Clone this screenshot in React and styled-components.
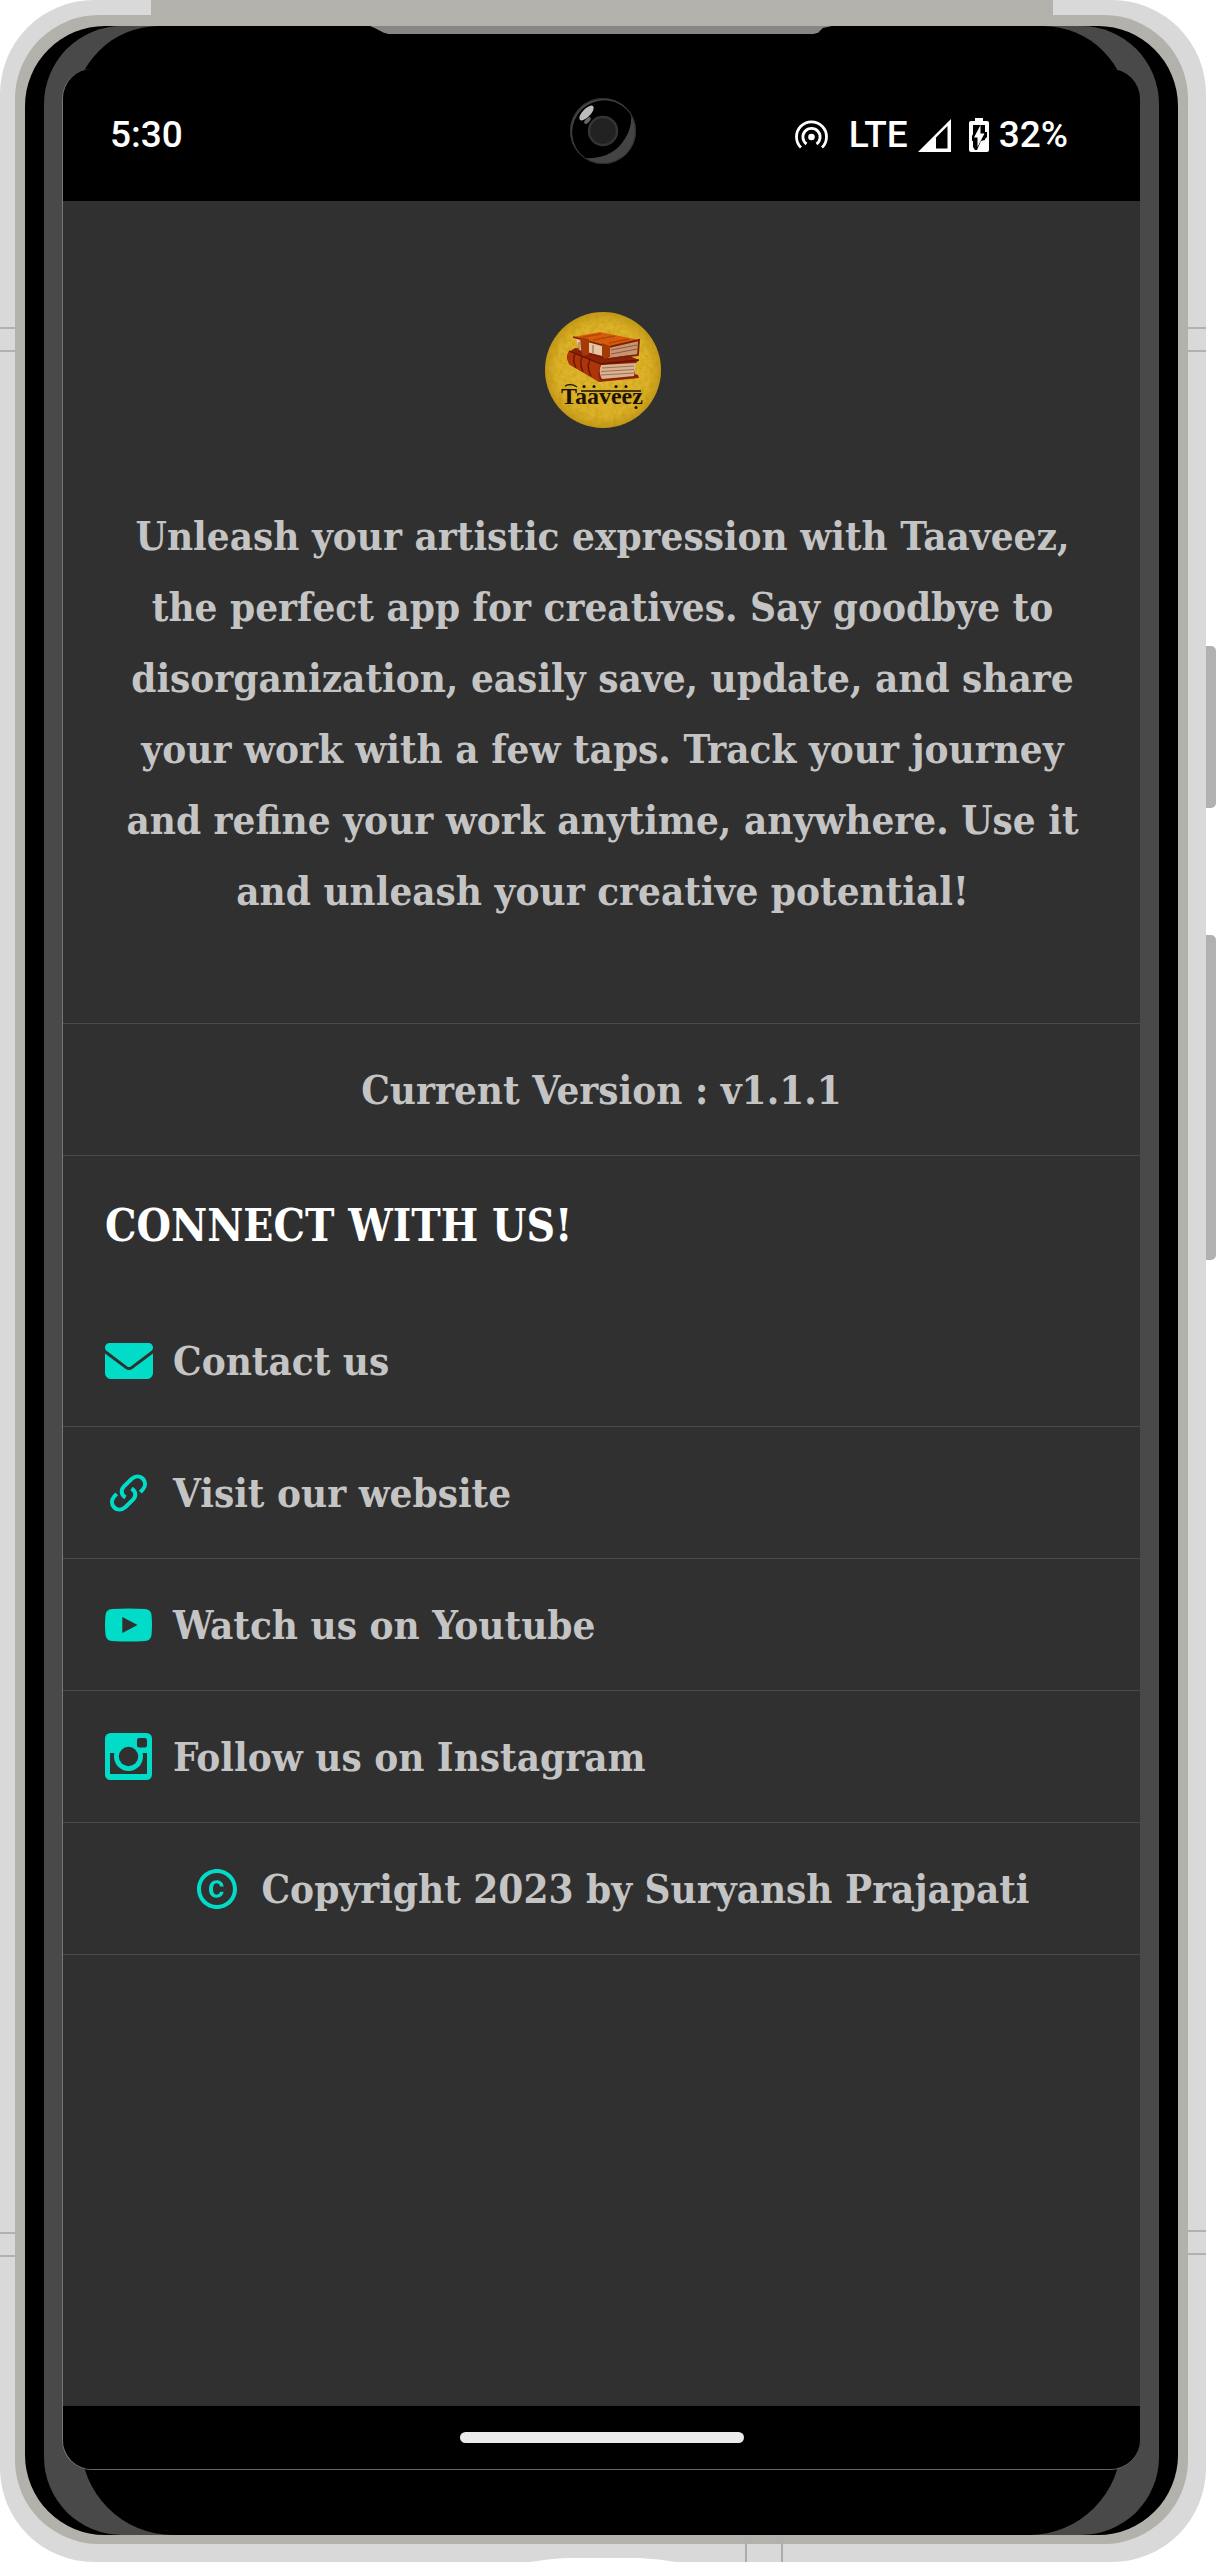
import React from "react";
import styled, { createGlobalStyle } from "styled-components";
import { FaEnvelope } from "react-icons/fa6";
import { MdCopyright } from "react-icons/md";

const GlobalStyle = createGlobalStyle`
  *, *::before, *::after { box-sizing: border-box; }
  body { margin: 0; background: #fff; }
`;

const slab = `"DejaVu Serif Condensed", "DejaVu Serif", serif`;

/* ---------- device ---------- */

const Device = styled.div`
  position: relative;
  display: flex;
  min-height: 100vh;
  margin-right: 10px;
  padding: 15px 18px 18px 15px;
  background: #d9d9d9;
  border-radius: 94px;
`;

const Rail = styled.div`
  flex: 1;
  display: flex;
  padding: 11px 10px 9px;
  background: #b2b1ab;
  border-radius: 84px;
`;

const Bezel = styled.div`
  flex: 1;
  display: flex;
  padding: 0 19px;
  background: #000;
  border-radius: 80px;
`;

const Glass = styled.div`
  flex: 1;
  display: flex;
  flex-direction: column;
  padding: 0 19px 0 18px;
  background: #494949;
  border-radius: 78px;
`;

const TopCap = styled.div`
  height: 85px;
  margin: 0 12px;
  background: #000;
  border-radius: 85px 85px 0 0;
`;

const BottomCap = styled.div`
  height: 92px;
  margin: -27px 19px 0;
  background: #000;
  border-radius: 0 0 92px 92px;
`;

const Screen = styled.div`
  position: relative;
  z-index: 1;
  flex: 1;
  display: flex;
  flex-direction: column;
  margin-top: -42px;
  overflow: hidden;
  background: #303030;
  border-left: 1px solid #777;
  border-bottom: 1px solid #666;
  border-radius: 30px;
`;

const TopBand = styled.div`
  position: absolute;
  top: 0;
  left: 151px;
  right: 153px;
  height: 26px;
  background: #b2b1ab;
`;

const Speaker = styled.div`
  position: absolute;
  top: 26px;
  left: 370px;
  right: 374px;
  height: 8px;
  background: #868686;
  clip-path: polygon(0 0, 100% 0, 98% 25%, 97% 85%, 96% 100%, 4% 100%, 3% 85%, 1% 25%);
`;

const SideKey = styled.div`
  position: absolute;
  left: 100%;
  top: ${(p) => p.$top}px;
  width: 10px;
  height: ${(p) => p.$length}px;
  background: #b1b1b1;
  border-radius: 0 5px 5px 0;
`;

const Antenna = styled.div`
  position: absolute;
  ${(p) => p.$side}: 0;
  ${(p) => (p.$top ? `top: ${p.$top}px` : `bottom: ${p.$bottom}px`)};
  width: ${(p) => (p.$side === "left" ? 16 : 19)}px;
  height: 25px;
  border: 2px solid #b1b1b1;
  border-width: 2px 0;
`;

const BottomAntenna = styled.div`
  position: absolute;
  bottom: 0;
  left: 745px;
  width: 38px;
  height: 19px;
  border: 2px solid #acacac;
  border-width: 0 2px;
`;

const Port = styled.div`
  position: absolute;
  bottom: 0;
  left: 530px;
  width: 146px;
  height: 4px;
  background: #fff;
  clip-path: polygon(0 100%, 12% 40%, 24% 0, 75% 0, 88% 40%, 100% 100%);
`;

/* ---------- status bar ---------- */

const StatusBar = styled.header`
  position: relative;
  display: flex;
  align-items: center;
  height: 132px;
  padding: 0 72px 0 47px;
  background: #000;
  color: #fff;
  font: 500 37px/44px Roboto, Lato, sans-serif;
`;

const StatusRight = styled.div`
  display: flex;
  align-items: center;
  gap: 10px;
  margin-left: auto;
`;

const Network = styled.span`
  margin-left: 11px;
`;

const Battery = styled.span`
  display: flex;
  align-items: center;
  gap: 10px;
  margin-left: 8px;
`;

const Camera = styled.svg`
  position: absolute;
  top: 29px;
  left: 50%;
  margin-left: -32px;
`;

/* ---------- page ---------- */

const Page = styled.main`
  flex: 1;
  display: flex;
  flex-direction: column;
  color: #c4c4c4;
  font: 700 40px/71px ${slab};
`;

const Intro = styled.section`
  display: flex;
  flex-direction: column;
  align-items: center;
  gap: 72px;
  padding: 111px 50px 97px 52px;
  border-bottom: 1px solid #4a4a4a;
`;

const About = styled.p`
  margin: 0;
  text-align: center;
`;

const Version = styled.p`
  display: flex;
  align-items: center;
  justify-content: center;
  height: 132px;
  margin: 0;
  border-bottom: 1px solid #4a4a4a;
`;

const Heading = styled.h2`
  display: flex;
  align-items: center;
  height: 139px;
  margin: 0;
  padding: 0 42px;
  color: #fff;
  font-size: 44px;
`;

const List = styled.ul`
  margin: 0;
  padding: 0;
  list-style: none;
`;

const Item = styled.li`
  border-bottom: 1px solid #4a4a4a;
`;

const ItemLink = styled.a`
  display: flex;
  align-items: center;
  gap: 20px;
  height: 131px;
  padding: 0 42px;
  color: inherit;
  text-decoration: none;

  svg {
    flex: none;
    color: #00dcc8;
  }
`;

const Copyright = styled(ItemLink).attrs({ as: "p" })`
  justify-content: center;
  margin: 0;
  padding: 0 22px 0 42px;
`;

const NavBar = styled.footer`
  display: flex;
  justify-content: center;
  align-items: center;
  height: 63px;
  background: #000;
`;

const HomeHandle = styled.button`
  width: 284px;
  height: 11px;
  padding: 0;
  border: 0;
  border-radius: 6px;
  background: #ebebeb;
`;

/* ---------- drawings ---------- */

const CameraLens = () => (
  <Camera width="66" height="66" viewBox="0 0 66 66" aria-hidden="true">
    <circle cx="33" cy="33" r="33" fill="#444" />
    <path d="M61 17A32 32 0 1 0 15 60C28 61 43 57 52 45C59 36 62 26 61 17Z" fill="#000" />
    <circle cx="33" cy="33" r="32.5" fill="none" stroke="#2e2e2e" strokeWidth="1" />
    <circle cx="33" cy="33" r="14" fill="#222" stroke="#343434" strokeWidth="2.5" />
    <ellipse cx="16.500" cy="15" rx="9.500" ry="4" fill="#bcbcbc" transform="rotate(-46 16.500 15)" />
    <ellipse cx="17.500" cy="22.500" rx="4.200" ry="2" fill="#666" transform="rotate(-46 17.500 22.500)" />
  </Camera>
);

const HotspotIcon = () => (
  <svg width="33" height="33" viewBox="0 0 33 33" fill="none" stroke="#fff" strokeWidth="2.800" aria-hidden="true">
    <circle cx="16.500" cy="18" r="3.300" fill="#fff" stroke="none" />
    <path d="M11.500 25A8.600 8.600 0 1 1 21.500 25" />
    <path d="M6 28.500A15 15 0 1 1 27 28.500" />
  </svg>
);

const SignalIcon = () => (
  <svg width="33" height="33" viewBox="0 0 33 33" aria-hidden="true">
    <path d="M0 33L33 0V33Z" fill="#fff" />
    <path d="M18 18.500L29.500 7V29.500H18Z" fill="#000" />
  </svg>
);

const BatteryIcon = () => (
  <svg width="20" height="34" viewBox="0 0 20 34" aria-hidden="true">
    <path d="M6 0h8v3h4a2 2 0 0 1 2 2v27a2 2 0 0 1-2 2H2a2 2 0 0 1-2-2V5a2 2 0 0 1 2-2h4Z" fill="#fff" />
    <path d="M4 7h12v7h2v5l-2 2v1l-4 1-4 9H6l-2-3v-6H3v-5l1-2Z" fill="#000" />
    <path d="M11.500 7v8.500H15.500L8.500 29V19.500H5Z" fill="#fff" />
  </svg>
);

const ChainIcon = () => (
  <svg width="48" height="48" viewBox="0 0 48 48" fill="none" stroke="currentColor" strokeWidth="4" aria-hidden="true">
    <path d="M20.500 28.500C16 25.500 15.500 21 19 17.300L26.500 10C30.500 6.500 35 6.700 37.700 9.500C40.800 12.700 40.700 17 38 20.300L35.300 23.200" />
    <path d="M26.500 19.500C31 22.500 31.500 27 28 30.700L20.500 38C16.500 41.500 12 41.300 9.300 38.500C6.200 35.300 6.300 31 9 27.700L11.700 24.800" />
  </svg>
);

const YoutubeIcon = () => (
  <svg width="48" height="48" viewBox="0 0 48 48" aria-hidden="true">
    <path
      fill="currentColor"
      fillRule="evenodd"
      d="M7 8Q24 7 40 8Q46 8.500 46.500 14Q47.500 24 46.500 34Q46 39.500 40 40Q24 41 7 40Q1 39.500 .5 34Q-.5 24 .5 14Q1 8.500 7 8ZM17.300 16V32L32.500 24Z"
    />
  </svg>
);

const InstagramIcon = () => (
  <svg width="48" height="48" viewBox="0 0 48 48" aria-hidden="true">
    <rect width="47" height="47" rx="5.500" fill="currentColor" />
    <path d="M5 20H42V41H5Z" fill="#303030" />
    <path d="M10 17H37V20.200H10Z" fill="currentColor" />
    <circle cx="23.500" cy="23.500" r="14.500" fill="currentColor" />
    <circle cx="23.500" cy="23.500" r="9.700" fill="#303030" />
    <rect x="32" y="5" width="10" height="9.500" rx="2.300" fill="#303030" />
  </svg>
);

const Logo = () => (
  <svg width="116" height="116" viewBox="0 0 116 116" role="img" aria-label="Taaveez">
    <defs>
      <radialGradient id="gold">
        <stop offset="0" stopColor="#e2b936" />
        <stop offset=".8" stopColor="#ddb12a" />
        <stop offset="1" stopColor="#c4971a" />
      </radialGradient>
      <filter id="grain" x="0" y="0" width="100%" height="100%">
        <feTurbulence type="fractalNoise" baseFrequency=".22" numOctaves="3" seed="4" />
        <feColorMatrix values="0 0 0 0 .45  0 0 0 0 .3  0 0 0 0 0  1.800 0 0 0 -.7" />
        <feComposite in2="SourceGraphic" operator="in" />
      </filter>
    </defs>
    <circle cx="58" cy="58" r="58" fill="url(#gold)" />
    <circle cx="58" cy="58" r="58" filter="url(#grain)" opacity=".6" />
    {/* lower book */}
    <path d="M24 40Q20 44 24 52L54 70L94 66L93 63L90 62V52L94 48L70 38L30 36Z" fill="#8e2209" />
    <path d="M56 53L91 51L89 64L57 67Q53 60 56 53Z" fill="#d9b391" />
    <path d="M57 56L89 54M56 59.500L89 57.500M56 63L89 61" stroke="#8d6042" strokeWidth=".8" />
    <path d="M24 39L56 52Q51 60 55 70L25 53Q20 45 24 39Z" fill="#ae3409" />
    <path d="M30 42Q27 48 31 56M37 45Q34 51 38 60M45 48Q41 55 46 64" fill="none" stroke="#701804" strokeWidth="1.500" />
    <path d="M24 39L56 52L94 48" fill="none" stroke="#5e1403" strokeWidth="1.300" />
    {/* upper book */}
    <path d="M31 26L65 33V46L34 38Z" fill="#e5c8a0" />
    <path d="M65 34L93 29V42L65 46Z" fill="#c89572" />
    <path d="M66 38L92 33M66 42L92 37M34 30V38M48 33V41" stroke="#865039" strokeWidth=".9" />
    <path d="M28 25L55 20L94 28L64 35Z" fill="#d65c0c" />
    <path d="M28 25L64 35L94 28L93 43L64 47L33 39" fill="none" stroke="#7d2105" strokeWidth="1.800" />
    <path d="M35 25L44 27V42L38 44L36 38ZM57 31L65 34V45L60 47L57 44Z" fill="#a53a06" />
    <path d="M38 25L56 22M48 28L70 24M64 31L84 27" stroke="#b54606" strokeWidth="1.500" />
    <text x="57" y="92" fill="#1b1204" fontSize="24" fontFamily="Liberation Serif, serif" fontWeight="700" textAnchor="middle">
      Taaveez
    </text>
    <path d="M20 74Q26 71 32 75M36 79H96" fill="none" stroke="#1b1204" strokeWidth="1.300" />
    <g fill="#1b1204">
      <circle cx="39" cy="74.500" r="1.500" />
      <circle cx="49" cy="74.500" r="1.500" />
      <circle cx="71" cy="74.500" r="1.500" />
      <circle cx="81" cy="74.500" r="1.500" />
      <circle cx="91" cy="95.500" r="1.500" />
    </g>
  </svg>
);

const links = [
  { label: "Contact us", icon: <FaEnvelope size={48} /> },
  { label: "Visit our website", icon: <ChainIcon /> },
  { label: "Watch us on Youtube", icon: <YoutubeIcon /> },
  { label: "Follow us on Instagram", icon: <InstagramIcon /> },
];

export default function App() {
  return (
    <>
      <GlobalStyle />
      <Device>
        <TopBand />
        <Antenna $side="left" $top={327} />
        <Antenna $side="right" $top={327} />
        <Antenna $side="left" $bottom={305} />
        <Antenna $side="right" $bottom={307} />
        <BottomAntenna />
        <Port />
        <SideKey $top={646} $length={162} />
        <SideKey $top={935} $length={325} />
        <Rail>
          <Bezel>
            <Glass>
              <TopCap />
              <Screen>
                <StatusBar>
                  <time>5:30</time>
                  <CameraLens />
                  <StatusRight>
                    <HotspotIcon />
                    <Network>LTE</Network>
                    <SignalIcon />
                    <Battery>
                      <BatteryIcon />
                      32%
                    </Battery>
                  </StatusRight>
                </StatusBar>
                <Page>
                  <Intro>
                    <Logo />
                    <About>
                      Unleash your artistic expression with Taaveez, the perfect app for creatives. Say goodbye to
                      disorganization, easily save, update, and share your work with a few taps. Track your journey
                      and refine your work anytime, anywhere. Use it and unleash your creative potential!
                    </About>
                  </Intro>
                  <Version>Current Version : v1.1.1</Version>
                  <Heading>CONNECT WITH US!</Heading>
                  <List>
                    {links.map(({ label, icon }) => (
                      <Item key={label}>
                        <ItemLink href="#">
                          {icon}
                          {label}
                        </ItemLink>
                      </Item>
                    ))}
                    <Item>
                      <Copyright>
                        <MdCopyright size={48} />
                        Copyright 2023 by Suryansh Prajapati
                      </Copyright>
                    </Item>
                  </List>
                </Page>
                <NavBar>
                  <HomeHandle aria-label="Home" />
                </NavBar>
              </Screen>
              <BottomCap />
            </Glass>
          </Bezel>
        </Rail>
        <Speaker />
      </Device>
    </>
  );
}
